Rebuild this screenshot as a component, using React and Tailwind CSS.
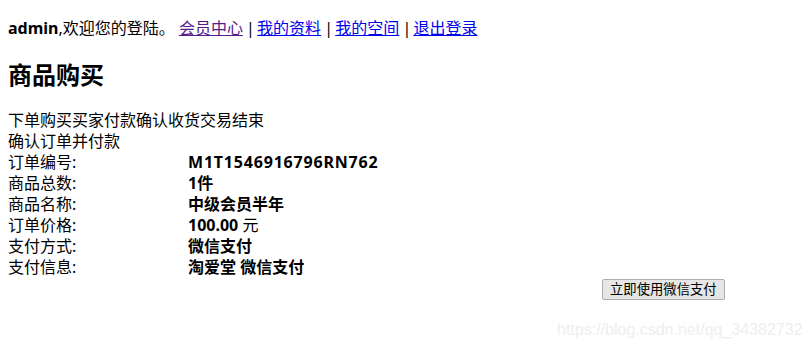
export default function App() {
  const font = { fontFamily: '"Noto Sans", "Noto Sans CJK SC", sans-serif' };
  const rows = [
    ["订单编号:", <b key="a" className="tracking-[0.8px]">M1T1546916796RN762</b>],
    ["商品总数:", <b key="b">1件</b>],
    ["商品名称:", <b key="c">中级会员半年</b>],
    ["订单价格:", <span key="d"><b>100.00</b> 元</span>],
    ["支付方式:", <b key="e">微信支付</b>],
    ["支付信息:", <b key="f">淘爱堂 微信支付</b>],
  ];
  const Sep = () => <span className="tracking-[-1px]"> | </span>;
  return (
    <div
      className="relative w-[809px] h-[348px] bg-white text-black text-[16px] leading-[21px] px-[8px] pt-[18px] overflow-hidden"
      style={font}
    >
      <div className="whitespace-pre">
        <b>admin</b>,欢迎您的登陆。 <a href="#" className="underline text-[#551a8b]">会员中心</a><Sep /><a href="#" className="underline text-[#0000ee]">我的资料</a><Sep /><a href="#" className="underline text-[#0000ee]">我的空间</a><Sep /><a href="#" className="underline text-[#0000ee]">退出登录</a>
      </div>
      <h2 className="mt-[20px] text-[24px] leading-[32px] font-bold">商品购买</h2>
      <div className="mt-[19px]">下单购买买家付款确认收货交易结束</div>
      <div>确认订单并付款</div>
      {rows.map(([k, v], i) => (
        <div key={i} className="flex">
          <div className="w-[180px] shrink-0">{k}</div>
          <div>{v}</div>
        </div>
      ))}
      <div className="flex pl-[594px] pt-[0.5px]">
        <button className="h-[21px] px-[7px] border border-[#adadad] rounded-[2px] bg-[#e6e6e6] text-[13.33px] leading-[19px] text-black">
          立即使用微信支付
        </button>
      </div>
      <div
        className="absolute left-[557px] top-[320px] text-[16px] leading-[20px] text-[#eeeeee] whitespace-nowrap"
        style={{ fontFamily: '"Liberation Sans", Arial, sans-serif' }}
      >
        https://blog.csdn.net/qq_34382732
      </div>
    </div>
  );
}
